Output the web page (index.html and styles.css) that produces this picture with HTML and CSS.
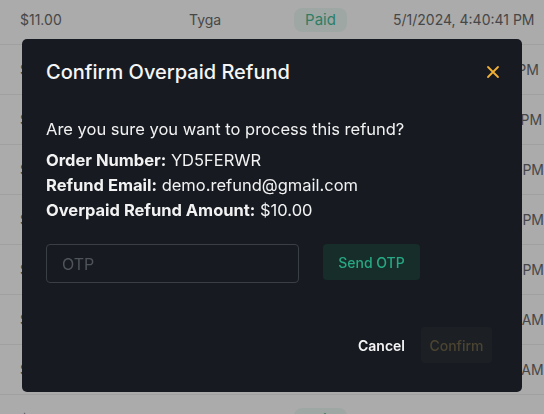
FILE: index.html
```html
<!DOCTYPE html>
<html lang="en">
<head>
<meta charset="utf-8">
<title>Confirm Overpaid Refund</title>
<link rel="stylesheet" href="styles.css">
</head>
<body>
<div class="table">
  <div class="row first"><span class="c-amt">$11.00</span><span class="c-name">Tyga</span><span class="c-status"><span class="badge">Paid</span></span><span class="c-date">5/1/2024, 4:40:41 PM</span></div>
  <div class="row"><span class="c-amt">$10.00</span><span class="c-name">Tyga</span><span class="c-status"><span class="badge">Paid</span></span><span class="c-date">5/1/2024, 12:38:12 PM</span></div>
  <div class="row"><span class="c-amt">$12.00</span><span class="c-name">Tyga</span><span class="c-status"><span class="badge">Paid</span></span><span class="c-date">5/1/2024, 12:30:05 PM</span></div>
  <div class="row"><span class="c-amt">$15.00</span><span class="c-name">Tyga</span><span class="c-status"><span class="badge">Paid</span></span><span class="c-date">4/30/2024, 11:20:44 PM</span></div>
  <div class="row"><span class="c-amt">$11.00</span><span class="c-name">Tyga</span><span class="c-status"><span class="badge">Paid</span></span><span class="c-date">4/30/2024, 9:12:30 PM</span></div>
  <div class="row"><span class="c-amt">$11.00</span><span class="c-name">Tyga</span><span class="c-status"><span class="badge">Paid</span></span><span class="c-date">4/30/2024, 9:02:10 PM</span></div>
  <div class="row"><span class="c-amt">$13.00</span><span class="c-name">Tyga</span><span class="c-status"><span class="badge">Paid</span></span><span class="c-date">4/30/2024, 10:41:52 AM</span></div>
  <div class="row"><span class="c-amt">$11.00</span><span class="c-name">Tyga</span><span class="c-status"><span class="badge">Paid</span></span><span class="c-date">4/30/2024, 9:11:05 AM</span></div>
  <div class="row"><span class="c-amt">$11.00</span><span class="c-name">Tyga</span><span class="c-status"><span class="badge">Paid</span></span><span class="c-date">4/29/2024, 8:01:15 PM</span></div>
</div>

<div class="overlay">
  <div class="modal">
    <div class="modal-header">
      <h2 class="modal-title">Confirm Overpaid Refund</h2>
      <button class="close-btn" aria-label="Close">
        <svg width="14" height="14" viewBox="0 0 14 14"><path d="M2 2 L12 12 M12 2 L2 12" stroke="#f2b134" stroke-width="1.8" stroke-linecap="round" fill="none"/></svg>
      </button>
    </div>
    <div class="modal-body">
      <p class="question">Are you sure you want to process this refund?</p>
      <p class="detail"><strong>Order Number:</strong> YD5FERWR</p>
      <p class="detail"><strong>Refund Email:</strong> demo.refund@gmail.com</p>
      <p class="detail"><strong>Overpaid Refund Amount:</strong> $10.00</p>
      <div class="otp-row">
        <input class="otp-input" type="text" placeholder="OTP">
        <button class="send-btn">Send OTP</button>
      </div>
    </div>
    <div class="modal-footer">
      <button class="cancel-btn">Cancel</button>
      <button class="confirm-btn" disabled>Confirm</button>
    </div>
  </div>
</div>
</body>
</html>
```

FILE: styles.css
```css
* { box-sizing: border-box; }
html, body { margin: 0; padding: 0; }
body {
  width: 544px;
  height: 414px;
  overflow: hidden;
  background: #ffffff;
  font-family: Inter, "Noto Sans", sans-serif;
  color: #6b6b6b;
}
.table { margin-top: -5px; }
.row {
  display: flex;
  align-items: center;
  height: 50px;
  border-bottom: 1px solid #efefef;
  font-size: 14px;
}
.c-amt { width: 170px; padding-left: 20px; }
.c-name { width: 124px; padding-left: 19px; }
.c-status { width: 99px; }
.c-date { white-space: nowrap; }
.badge {
  display: inline-block;
  width: 53px;
  height: 24px;
  line-height: 24px;
  text-align: center;
  border-radius: 8px;
  background: #eefaf5;
  color: #47bb95;
  font-size: 15px;
}

.overlay {
  position: fixed;
  inset: 0;
  background: rgba(0, 0, 0, 0.33);
  display: flex;
  justify-content: center;
  align-items: flex-start;
  padding-top: 39px;
}
.modal {
  width: 500px;
  height: 353px;
  background: #171b21;
  border-radius: 5px;
  color: #ffffff;
  display: flex;
  flex-direction: column;
}
.modal-header {
  display: flex;
  justify-content: space-between;
  align-items: center;
  padding: 18px 22px 18px 24px;
}
.modal-title {
  margin: 0;
  font-size: 20px;
  line-height: 30px;
  font-weight: 500;
  color: #f5f5f5;
}
.close-btn {
  background: none;
  border: 0;
  padding: 0;
  width: 14px;
  height: 14px;
  display: flex;
  cursor: pointer;
}
.modal-body {
  padding: 12px 24px 0 24px;
}
.modal-body p {
  margin: 0;
  font-size: 16.5px;
  line-height: 25px;
  color: #f2f2f2;
}
.modal-body p.question { margin-bottom: 6px; }
.modal-body strong { font-weight: 700; }
.otp-row {
  display: flex;
  align-items: flex-start;
  gap: 24px;
  margin-top: 21px;
}
.otp-input {
  width: 253px;
  height: 39px;
  background: transparent;
  border: 1px solid #3a3e45;
  border-radius: 4px;
  padding: 0 15px;
  font-family: inherit;
  font-size: 16px;
  color: #ddd;
  outline: none;
}
.otp-input::placeholder { color: #4f545a; }
.send-btn {
  width: 97px;
  height: 36px;
  border: 0;
  border-radius: 4px;
  background: #162d29;
  color: #27a884;
  font-family: inherit;
  font-size: 14px;
  font-weight: 500;
}
.modal-footer {
  margin-top: auto;
  display: flex;
  justify-content: flex-end;
  align-items: center;
  gap: 8px;
  padding: 0 30px 29px 24px;
}
.cancel-btn {
  background: none;
  border: 0;
  padding: 0 8px;
  height: 36px;
  color: #f5f5f5;
  font-family: inherit;
  font-size: 14px;
  font-weight: 600;
}
.confirm-btn {
  width: 71px;
  height: 36px;
  border: 0;
  border-radius: 4px;
  background: #1c2024;
  color: #4b4431;
  font-family: inherit;
  font-size: 14px;
  font-weight: 500;
}
```
